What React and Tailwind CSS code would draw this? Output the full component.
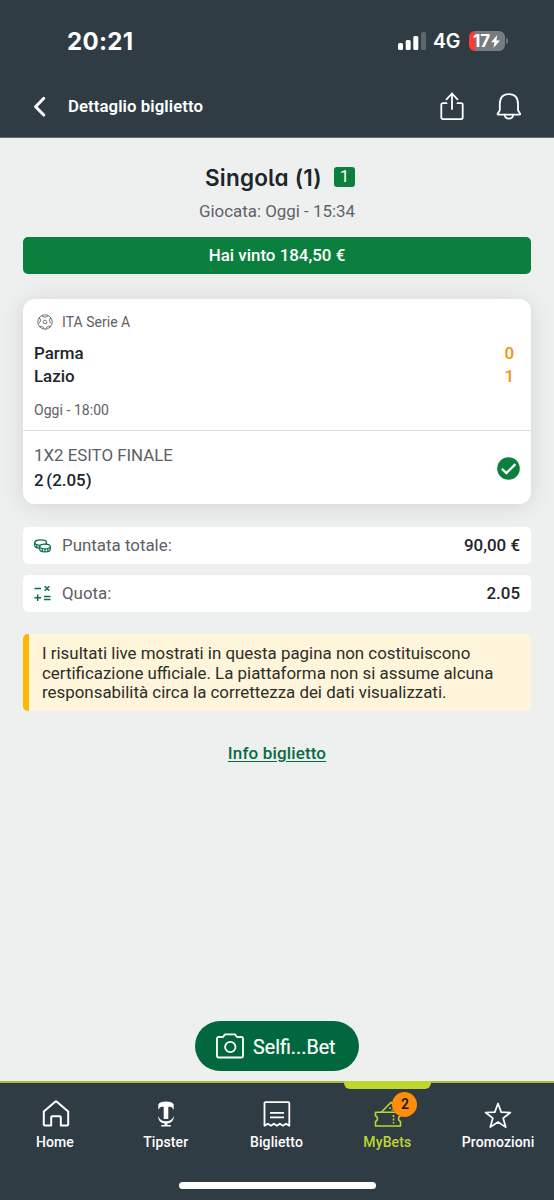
import React from "react";

function StatusBar() {
  return (
    <div className="flex h-[82px] items-center justify-between pl-[67px] pr-[46px] text-white">
      <span className="pt-[2px] font-['Inter',sans-serif] text-[24px] font-bold leading-none tracking-[0.35px]">20:21</span>
      <div className="flex items-center">
        <svg width="28" height="18" viewBox="0 0 28 18" fill="#fff">
          <rect x="0" y="11" width="5" height="7" rx="1.5" />
          <rect x="7.7" y="8" width="5" height="10" rx="1.5" />
          <rect x="15.3" y="4" width="5" height="14" rx="1.5" />
          <rect x="23" y="0" width="5" height="18" rx="1.5" fillOpacity=".22" />
        </svg>
        <span className="ml-[7px] w-[36px] pt-px font-['Inter',sans-serif] text-[19.500px] font-semibold leading-none tracking-[-0.2px]">4G</span>
        <div className="flex h-5 w-9 items-center overflow-hidden rounded-[6px] bg-linear-to-r from-[#ff3b30] from-[6px] to-[#767c80] to-[6px] pl-[4px]">
          <span className="pt-px font-['Inter',sans-serif] text-[17px] font-bold leading-none tracking-[-0.2px]">17</span>
          <svg className="ml-px" width="9" height="13" viewBox="0 0 9 13" fill="#fff">
            <path d="M6.200 0 0 7.300h3.400L2.400 13 9 5.400H5.400z" />
          </svg>
        </div>
        <div className="ml-px h-[6px] w-[2px] rounded-r-full bg-[#6c7378]" />
      </div>
    </div>
  );
}

function TitleBar() {
  return (
    <div className="flex h-[49px] items-center pl-[33px] pr-[32px] text-white">
      <svg width="14" height="22" viewBox="0 0 14 22" fill="none" stroke="#fff" strokeWidth="3" strokeLinecap="round" strokeLinejoin="round">
        <path d="M10.800 2.300 2.600 10.700l8.200 8.300" />
      </svg>
      <h1 className="ml-[21px] flex-1 text-[16.800px] font-semibold leading-none tracking-[0.06px]">Dettaglio biglietto</h1>
      <svg width="26" height="30" viewBox="0 0 26 30" fill="none" stroke="#fff" strokeWidth="1.800" strokeLinecap="round" strokeLinejoin="round">
        <path d="M7.500 11.200H3.900a1.600 1.600 0 0 0-1.600 1.600v12.800a1.600 1.600 0 0 0 1.600 1.600h18.200a1.600 1.600 0 0 0 1.600-1.600V12.800a1.600 1.600 0 0 0-1.600-1.600h-3.600M13 17V1.500M7.500 7.300 13 1.500l5.500 5.800" />
      </svg>
      <svg className="ml-[31px]" width="26" height="30" viewBox="0 0 26 30" fill="none" stroke="#fff" strokeWidth="1.800" strokeLinecap="round" strokeLinejoin="round">
        <path d="M3.800 18.300V12.300C3.800 5.800 7 2.200 12.800 2.200S22 5.800 22 12.300v6l2.100 3.400a.55.55 0 0 1-.45.850H2.100a.55.55 0 0 1-.45-.85z" />
        <path d="M8.600 22.700c.3 2.500 1.900 4 4.300 4s4-1.500 4.300-4" />
      </svg>
    </div>
  );
}

function BallIcon() {
  return (
    <svg width="16" height="16" viewBox="0 0 16 16" fill="none" stroke="#666" strokeWidth=".9" strokeLinejoin="round">
      <circle cx="8" cy="8" r="7.200" />
      <path d="m8 6 1.900 1.400-.7 2.200H6.800l-.7-2.200z" />
      <path d="M5.200 1.300 5.600 2.600 8 3.200l2.400-.6.400-1.300M14.200 4.300l-1.500.5-.1 2.500 1.400 2M13.200 12.900l-1.400-.8-2.200 1.200-.6 1.800M7 15.100l-.6-1.800-2.200-1.200-1.400.8M2 9.300l1.400-2-.1-2.500-1.500-.5" />
    </svg>
  );
}

function CoinsIcon() {
  return (
    <svg width="17" height="14" viewBox="0 0 17 14" fill="none" stroke="#0b7048" strokeWidth="1.200">
      <ellipse cx="6.600" cy="3.600" rx="5.900" ry="2.700" />
      <path d="M.7 3.600v2.800c0 1.400 1.800 2.400 4.400 2.700M2.800 5.800V8M5.300 6.300v2.300M12.500 3.600v1.500" />
      <ellipse cx="11" cy="7.500" rx="5.300" ry="2.400" fill="#fff" />
      <path d="M5.700 7.500v2.800c0 1.500 2.300 2.600 5.300 2.600s5.300-1.100 5.300-2.600V7.500M8.300 9.700v2.600M11 10v2.900M13.800 9.700v2.600" />
    </svg>
  );
}

function OddsIcon() {
  return (
    <svg width="17" height="16" viewBox="0 0 17 16" fill="none" stroke="#0b7048" strokeWidth="1.500">
      <path d="M.5 2.500h6.500M10.700.200l4.600 4.600M15.300.200l-4.600 4.600M.5 11.800h6.500M3.700 8.600v6.400M10 10.500h6.500M10 13.500h6.500" />
    </svg>
  );
}

function MatchCard() {
  return (
    <section className="mt-[25px] h-[205px] rounded-xl bg-white shadow-[0_2px_24px_rgba(0,0,0,0.11)]">
      <div className="flex h-[132px] flex-col border-b border-[#dedede] px-[11px] pt-[12px]">
        <div className="flex h-[22px] items-center pl-[3px] text-[14px] text-[#5d6064]">
          <BallIcon />
          <span className="ml-[9px] tracking-[0.03px]">ITA Serie A</span>
        </div>
        <div className="mt-[9px] flex h-[23px] items-center justify-between pr-[6px] text-[16.900px] font-medium text-[#20252a]">
          <span>Parma</span>
          <span className="text-[#f7900f]">0</span>
        </div>
        <div className="flex h-[23px] items-center justify-between pr-[6px] text-[16.900px] font-medium text-[#20252a]">
          <span>Lazio</span>
          <span className="text-[#f7900f]">1</span>
        </div>
        <div className="mt-[11px] flex h-[22px] items-center text-[14px] tracking-[0.05px] text-[#5d6064]">Oggi - 18:00</div>
      </div>
      <div className="flex h-[73px] items-center justify-between px-[11px]">
        <div className="flex flex-col pt-[2px]">
          <span className="flex h-[25px] items-center text-[16.850px] text-[#5d6064]">1X2 ESITO FINALE</span>
          <span className="flex h-[25px] items-center text-[16.900px] font-medium text-[#20252a] [word-spacing:-1.5px]">2 (2.05)</span>
        </div>
        <svg className="mt-px" width="23" height="23" viewBox="0 0 23 23">
          <circle cx="11.500" cy="11.500" r="11.300" fill="#0b803e" />
          <path d="m4.900 11.700 4.500 4.400 9-9" fill="none" stroke="#fff" strokeWidth="2.200" />
        </svg>
      </div>
    </section>
  );
}

function SummaryRow({ icon, label, value }) {
  return (
    <div className="flex h-[37px] items-center rounded-[5px] bg-white px-[11px] text-[16.900px]">
      {icon}
      <span className="ml-[11px] flex-1 text-[#5d6064]">{label}</span>
      <span className="font-medium text-[#20252a]">{value}</span>
    </div>
  );
}

function TicketIcon() {
  return (
    <svg width="28" height="28" viewBox="0 0 28 28" fill="none" stroke="#bfd530" strokeWidth="1.600" strokeLinejoin="round">
      <path d="M1.500 12.300h25v3.500c-1.300.6-2 1.500-2 2.900s.7 2.300 2 2.900V26h-25v-4.400c1.300-.6 2-1.500 2-2.900s-.7-2.300-2-2.900z" />
      <path d="m7.300 12.300 9.800-10 8.900 10" />
      <path d="M19.500 15v8.500" strokeDasharray="2 1.500" />
      <path d="m15.500 7.500 1.200 1.200M18 9.700l.8.800" />
    </svg>
  );
}

const tabs = [
  {
    label: "Home",
    icon: (
      <svg className="ml-px" width="28" height="28" viewBox="0 0 28 28" fill="none" stroke="#fff" strokeWidth="2" strokeLinejoin="round">
        <path d="M1.800 11.500 13.200 1.700a1.200 1.200 0 0 1 1.600 0l11.400 9.800v13a1 1 0 0 1-1 1h-6.400v-8.300a1 1 0 0 0-1-1h-7.600a1 1 0 0 0-1 1v8.300H2.900a1.100 1.100 0 0 1-1.100-1.100z" />
      </svg>
    ),
  },
  {
    label: "Tipster",
    icon: (
      <svg width="28" height="28" viewBox="0 0 28 28" fill="#fff">
        <path d="M6.300 9.800V4.500C7.500 2.500 10 1.600 14 1.600s6.500.9 7.700 2.900v5.300c-.9-1.800-2-2.900-3.400-3.100h-2V19h-4.600V6.700h-2c-1.400.2-2.500 1.300-3.400 3.100z" />
        <path d="M6.200 16c1.200 3.600 3.900 5.200 7.800 5.200s6.600-1.600 7.800-5.200c.1 4.300-2.200 6.900-6.400 7.600v1.500h3.400v1.400H9.200v-1.400h3.400v-1.500C8.400 22.900 6.100 20.300 6.200 16z" />
      </svg>
    ),
  },
  {
    label: "Biglietto",
    icon: (
      <svg width="28" height="28" viewBox="0 0 28 28" fill="none" stroke="#fff" strokeWidth="1.800" strokeLinejoin="round">
        <path d="M1.500 3.200a1 1 0 0 1 1-1h22.800a1 1 0 0 1 1 1v22.500l-3.300-2-3.100 2-3-2-3 2-3-2-3 2-3-2-3.400 2zM7 12.800h14M7 17.300h14" />
      </svg>
    ),
  },
  { label: "MyBets", icon: <TicketIcon />, active: true, badge: 2 },
  {
    label: "Promozioni",
    icon: (
      <svg className="mr-[2px] mt-[2px]" width="28" height="30" viewBox="0 0 28 30" fill="none" stroke="#fff" strokeWidth="1.700" strokeLinejoin="round">
        <path d="m14 3.500 3.200 8.600 9.200.4-7.200 5.700 2.500 8.900-7.700-5.100-7.700 5.100 2.500-8.900-7.200-5.700 9.200-.4z" />
      </svg>
    ),
  },
];

function BottomNav() {
  return (
    <nav className="relative h-[119px] border-t-2 border-[#a5bd2f] bg-[#303c44]">
      <div className="grid h-[98px] grid-cols-5">
        {tabs.map((tab) => (
          <div key={tab.label} className={tab.active ? "relative flex flex-col items-center pt-[17px] text-[#bfd530]" : "relative flex flex-col items-center pt-[17px] text-white"}>
            {tab.active && <div className="absolute inset-x-[12px] top-[-2px] h-[8px] rounded-b-[6px] bg-[#bfd530]" />}
            <div className="flex h-7 items-center justify-center">{tab.icon}</div>
            {tab.badge && (
              <span className="absolute left-[60px] top-[9px] flex size-[25px] items-center justify-center rounded-full bg-[#ff8d09] text-[14px] font-semibold text-[#151515]">{tab.badge}</span>
            )}
            <span className="mr-px mt-[4px] text-[14px] font-medium leading-[20px] tracking-[0.1px]">{tab.label}</span>
          </div>
        ))}
      </div>
      <div className="mx-auto mt-px h-[7px] w-[197px] rounded-full bg-white" />
    </nav>
  );
}

export default function App() {
  return (
    <div className="flex h-[1200px] w-[554px] flex-col overflow-hidden bg-[#eef0f0] font-['Roboto',sans-serif]">
      <header className="h-[138px] border-b border-[#697176] bg-[#303c44]">
        <StatusBar />
        <TitleBar />
      </header>
      <main className="flex flex-1 flex-col px-[23px]">
        <div className="mt-[25px] flex h-[28px] items-center pl-[182px]">
          <h2 className="w-[129px] whitespace-nowrap pt-[2px] font-['Inter',sans-serif] text-[22.500px] font-semibold leading-none tracking-[0.2px] text-[#20252a] [font-feature-settings:'cv11','cv05']">Singola (1)</h2>
          <span className="flex h-[20px] w-[21px] items-center justify-center rounded-[3px] bg-[#0b803e] text-[17px] text-white">1</span>
        </div>
        <p className="mt-[9px] flex h-6 items-center justify-center text-[16.900px] text-[#606367]">Giocata: Oggi - 15:34</p>
        <div className="mt-[13px] flex h-[37px] items-center justify-center rounded-[5px] bg-[#0b803e] text-[16.900px] font-medium text-white">Hai vinto 184,50 €</div>
        <MatchCard />
        <div className="mt-[23px] flex flex-col gap-[11px]">
          <SummaryRow icon={<CoinsIcon />} label="Puntata totale:" value="90,00 €" />
          <SummaryRow icon={<OddsIcon />} label="Quota:" value="2.05" />
        </div>
        <p className="mt-[22px] h-[77px] whitespace-nowrap rounded-[5px] border-l-[6px] border-[#fcb900] bg-[#fff5db] pl-[13px] pt-[10px] text-[16.900px] leading-[19.700px] text-[#2e2d28]">
          I risultati live mostrati in questa pagina non costituiscono
          <br />
          certificazione ufficiale. La piattaforma non si assume alcuna
          <br />
          responsabilità circa la correttezza dei dati visualizzati.
        </p>
        <a className="mt-[31px] flex h-6 items-center justify-center text-[17px] font-medium tracking-[0.15px] text-[#0a6a43] underline underline-offset-[2px]">Info biglietto</a>
        <button className="mx-auto mb-[10px] mt-auto flex h-[50px] w-[164px] items-center rounded-full bg-[#00673e] pl-[21px] text-[19.700px] text-white">
          <svg width="28" height="26" viewBox="0 0 28 26" fill="none" stroke="#fff" strokeWidth="1.800" strokeLinejoin="round">
            <path d="M1 5.500A1.500 1.500 0 0 1 2.500 4H7l2-2.600h10L21 4h4.500A1.500 1.500 0 0 1 27 5.500V23a1.500 1.500 0 0 1-1.500 1.500h-23A1.500 1.500 0 0 1 1 23z" />
            <circle cx="14.300" cy="14" r="5.200" />
          </svg>
          <span className="ml-[9px] pt-[3px] leading-none [-webkit-text-stroke:0.2px_#fff]">Selfi...Bet</span>
        </button>
      </main>
      <BottomNav />
    </div>
  );
}
